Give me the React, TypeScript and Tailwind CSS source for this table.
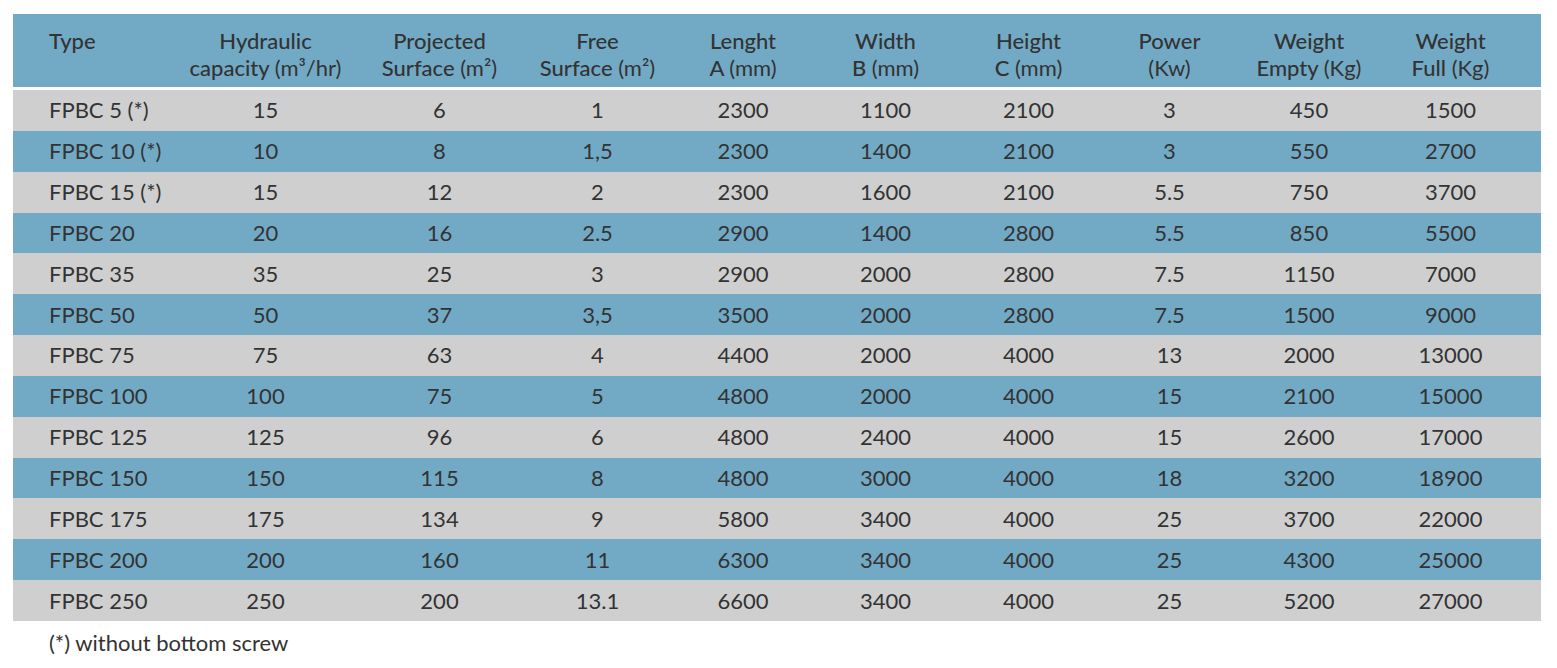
import React from 'react';

type Row = [string, string, string, string, string, string, string, string, string, string];

const rows: Row[] = [
  ['FPBC 5 (*)', '15', '6', '1', '2300', '1100', '2100', '3', '450', '1500'],
  ['FPBC 10 (*)', '10', '8', '1,5', '2300', '1400', '2100', '3', '550', '2700'],
  ['FPBC 15 (*)', '15', '12', '2', '2300', '1600', '2100', '5.5', '750', '3700'],
  ['FPBC 20', '20', '16', '2.5', '2900', '1400', '2800', '5.5', '850', '5500'],
  ['FPBC 35', '35', '25', '3', '2900', '2000', '2800', '7.5', '1150', '7000'],
  ['FPBC 50', '50', '37', '3,5', '3500', '2000', '2800', '7.5', '1500', '9000'],
  ['FPBC 75', '75', '63', '4', '4400', '2000', '4000', '13', '2000', '13000'],
  ['FPBC 100', '100', '75', '5', '4800', '2000', '4000', '15', '2100', '15000'],
  ['FPBC 125', '125', '96', '6', '4800', '2400', '4000', '15', '2600', '17000'],
  ['FPBC 150', '150', '115', '8', '4800', '3000', '4000', '18', '3200', '18900'],
  ['FPBC 175', '175', '134', '9', '5800', '3400', '4000', '25', '3700', '22000'],
  ['FPBC 200', '200', '160', '11', '6300', '3400', '4000', '25', '4300', '25000'],
  ['FPBC 250', '250', '200', '13.1', '6600', '3400', '4000', '25', '5200', '27000'],
];

// main label + unit on the second line
const headers: [string, string, string][] = [
  ['Hydraulic', 'capacity', '(m³/hr)'],
  ['Projected', 'Surface', '(m²)'],
  ['Free', 'Surface', '(m²)'],
  ['Lenght', 'A', '(mm)'],
  ['Width', 'B', '(mm)'],
  ['Height', 'C', '(mm)'],
  ['Power', '', '(Kw)'],
  ['Weight', 'Empty', '(Kg)'],
  ['Weight', 'Full', '(Kg)'],
];

const widths = [162, 181, 167, 149, 142, 143, 143, 139, 140, 143];

export default function App() {
  return (
    <div className="min-h-screen bg-white pt-[14px] pl-[13px] text-[#333333] font-['Lato','Noto_Sans',sans-serif]">
      <table className="w-[1528px] table-fixed border-collapse text-[22px]">
        <colgroup>
          {widths.map((w, i) => (
            <col key={i} style={{ width: w }} />
          ))}
          <col />
        </colgroup>
        <thead>
          <tr className="bg-[#72aac6] h-[73px]">
            <th className="pl-[36px] pt-[13px] pb-[6px] text-left align-top font-medium leading-[27px]">Type</th>
            {headers.map(([a, b, unit], i) => (
              <th key={i} className="pt-[13px] pb-[6px] text-center align-top font-medium leading-[27px] whitespace-nowrap">
                <div>{a}</div>
                <div>
                  {b && <span>{b} </span>}
                  <span className="font-normal">{unit}</span>
                </div>
              </th>
            ))}
            <th />
          </tr>
          <tr className="h-[3px] bg-white">
            <th colSpan={11} className="p-0" />
          </tr>
        </thead>
        <tbody>
          {rows.map((r, i) => (
            <tr key={r[0]} className={`h-[40.85px] ${i % 2 === 0 ? 'bg-[#cfcfcf]' : 'bg-[#72aac6]'}`}>
              {r.map((v, j) => (
                <td
                  key={j}
                  className={`whitespace-nowrap leading-none ${j === 0 ? 'pl-[36px] text-left' : 'text-center'}`}
                >
                  {v}
                </td>
              ))}
              <td />
            </tr>
          ))}
        </tbody>
      </table>
      <p className="pl-[36px] pt-[8px] text-[22px] leading-[27px]">(*) without bottom screw</p>
    </div>
  );
}
